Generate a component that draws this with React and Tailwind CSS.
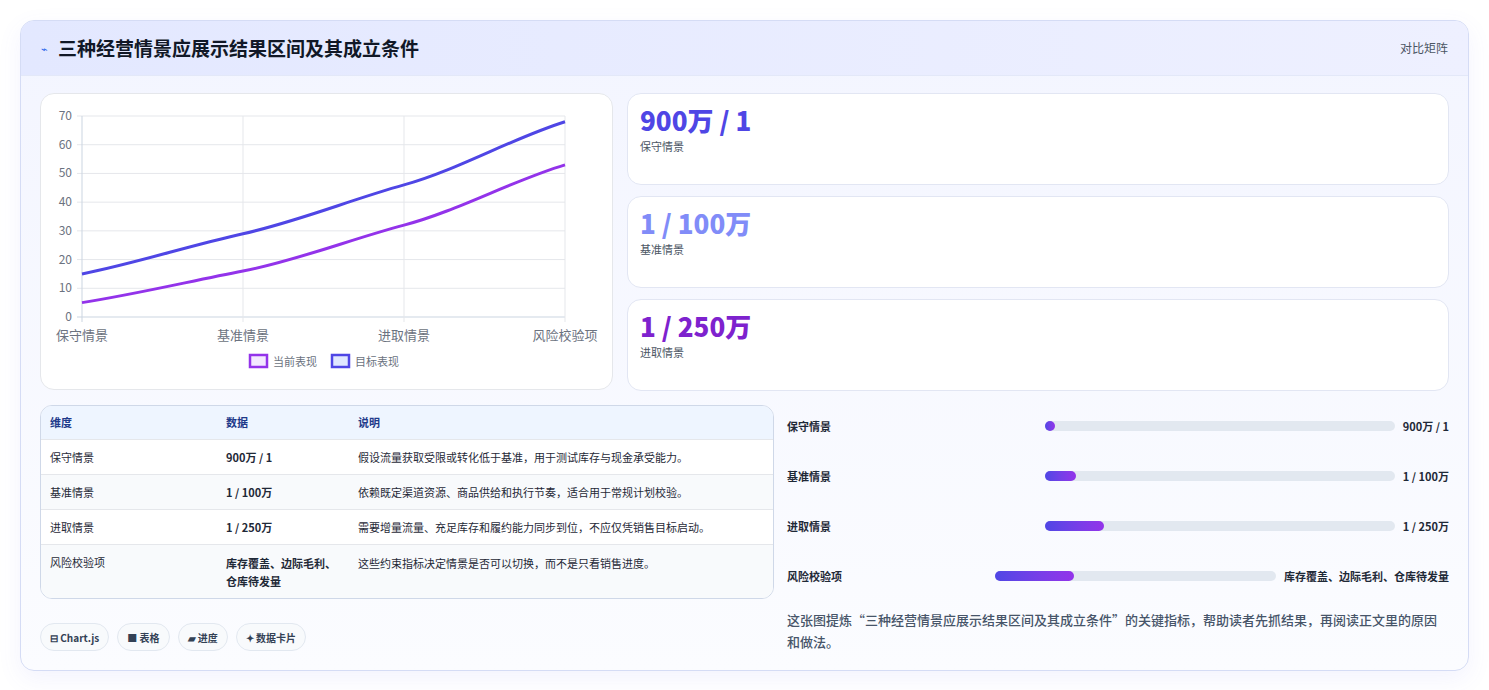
import React from 'react'

const font = { fontFamily: '"Noto Sans CJK SC", "Noto Sans", sans-serif' }

const cards = [
  { v: '900万 / 1', l: '保守情景', c: 'text-[#4f46e5]' },
  { v: '1 / 100万', l: '基准情景', c: 'text-[#818cf8]' },
  { v: '1 / 250万', l: '进取情景', c: 'text-[#7e22ce]' },
]

const rows = [
  ['保守情景', '900万 / 1', '假设流量获取受限或转化低于基准，用于测试库存与现金承受能力。'],
  ['基准情景', '1 / 100万', '依赖既定渠道资源、商品供给和执行节奏，适合用于常规计划校验。'],
  ['进取情景', '1 / 250万', '需要增量流量、充足库存和履约能力同步到位，不应仅凭销售目标启动。'],
  ['风险校验项', '库存覆盖、边际毛利、仓库待发量', '这些约束指标决定情景是否可以切换，而不是只看销售进度。'],
]

const bars = [
  ['保守情景', 3, '900万 / 1'],
  ['基准情景', 9, '1 / 100万'],
  ['进取情景', 17, '1 / 250万'],
  ['风险校验项', 28, '库存覆盖、边际毛利、仓库待发量'],
]

function Chart() {
  const x0 = 41, x1 = 524, y0 = 223, y1 = 22
  const xs = [0, 1, 2, 3].map(i => x0 + (i * (x1 - x0)) / 3)
  const y = v => y0 - ((y0 - y1) * v) / 70
  const path = vals => {
    const p = vals.map((v, i) => [xs[i], y(v)])
    let d = `M${p[0][0]},${p[0][1]}`
    for (let i = 1; i < p.length; i++) {
      const a = p[i - 1], b = p[i]
      const dx = (b[0] - a[0]) / 3
      const pa = p[i - 2] || a, nb = p[i + 1] || b
      const s1 = (b[1] - pa[1]) / (b[0] - pa[0] || 1)
      const s2 = (nb[1] - a[1]) / (nb[0] - a[0] || 1)
      d += ` C${a[0] + dx},${a[1] + s1 * dx * 0.8} ${b[0] - dx},${b[1] - s2 * dx * 0.8} ${b[0]},${b[1]}`
    }
    return d
  }
  const labels = ['保守情景', '基准情景', '进取情景', '风险校验项']
  return (
    <svg width="572" height="296" viewBox="0 0 572 296" style={font}>
      {[0, 10, 20, 30, 40, 50, 60, 70].map(v => (
        <g key={v}>
          <line x1={x0 - 5} x2={x1} y1={y(v)} y2={y(v)} stroke={v === 0 ? '#cbd5e1' : '#e5e7eb'} />
          <text x={x0 - 10} y={y(v) + 4} textAnchor="end" fontSize="12" fill="#6b7280">{v}</text>
        </g>
      ))}
      {xs.map((x, i) => (
        <g key={i}>
          <line x1={x} x2={x} y1={y1} y2={y0 + 5} stroke={i === 0 ? '#cbd5e1' : '#e5e7eb'} />
          <text x={x} y={y0 + 23} textAnchor="middle" fontSize="13" fill="#6b7280">{labels[i]}</text>
        </g>
      ))}
      <path d={path([15, 29, 46, 68])} fill="none" stroke="#4f46e5" strokeWidth="3" />
      <path d={path([5, 16, 32, 53])} fill="none" stroke="#9333ea" strokeWidth="3" />
      <rect x="209" y="261" width="17" height="12" fill="#f3e8ff" stroke="#9333ea" strokeWidth="2.5" />
      <text x="232" y="272" fontSize="11" fill="#6b7280">当前表现</text>
      <rect x="291" y="261" width="17" height="12" fill="#e0e7ff" stroke="#4f46e5" strokeWidth="2.5" />
      <text x="314" y="272" fontSize="11" fill="#6b7280">目标表现</text>
    </svg>
  )
}

export default function App() {
  return (
    <div className="min-h-screen bg-white p-5" style={font}>
      <div className="rounded-[14px] border border-[#d5dcf5] bg-gradient-to-b from-[#f3f5ff] to-[#fbfcff] shadow-[0_8px_24px_rgba(99,102,241,0.08)] overflow-hidden">
        <div className="flex items-center justify-between h-[55px] px-5 bg-gradient-to-r from-[#e3e8ff] to-[#eef0ff] border-b border-[#e3e8f8]">
          <div className="flex items-center gap-2.5">
            <span className="text-[#2563eb] text-[11px]">⌁</span>
            <h1 className="text-[19px] font-bold text-[#111827]">三种经营情景应展示结果区间及其成立条件</h1>
          </div>
          <span className="text-xs text-[#4b5563]">对比矩阵</span>
        </div>
        <div className="px-[19px] pt-[17px] pb-[17px]">
          <div className="flex gap-[14px]">
            <div className="w-[573px] h-[297px] rounded-[14px] border border-[#e5e7eb] bg-white">
              <Chart />
            </div>
            <div className="flex-1 flex flex-col gap-[11px]">
              {cards.map(c => (
                <div key={c.l} className="h-[92px] rounded-[14px] border border-[#e2e6f3] bg-white px-3 pt-2">
                  <div className={`text-[26px] font-extrabold leading-[36px] ${c.c}`}>{c.v}</div>
                  <div className="text-[11px] text-[#4b5563]">{c.l}</div>
                </div>
              ))}
            </div>
          </div>
          <div className="flex gap-[13px] mt-[14px]">
            <div className="w-[734px]">
              <div className="rounded-[12px] border border-[#cfd8e8] overflow-hidden bg-white text-[11px]">
                <div className="grid grid-cols-[176px_132px_1fr] bg-[#eef5ff] h-[33px] items-center px-[9px] font-bold text-[#1e3a8a]">
                  <span>维度</span><span>数据</span><span>说明</span>
                </div>
                {rows.map((r, i) => (
                  <div key={i} className={`grid grid-cols-[176px_132px_1fr] px-[9px] border-t border-[#e5e7eb] text-[#1f2937] ${i % 2 ? 'bg-[#f8fafc]' : 'bg-white'} ${i === 3 ? 'py-[9px] h-[54px]' : 'h-[35px] items-center'}`}>
                    <span>{r[0]}</span>
                    <span className="font-semibold pr-3 leading-[18px]">{r[1]}</span>
                    <span className="leading-[18px]">{r[2]}</span>
                  </div>
                ))}
              </div>
              <div className="flex gap-2 mt-[24px]">
                {['⊟ Chart.js', '■ 表格', '▰ 进度', '✦ 数据卡片'].map(t => (
                  <span key={t} className="h-[28px] px-[9px] flex items-center rounded-full border border-[#e2e8f0] bg-[#f8fafc] text-[10px] font-bold text-[#334155]">{t}</span>
                ))}
              </div>
            </div>
            <div className="flex-1 -mt-1">
              {bars.map(([l, p, v]) => (
                <div key={l} className="grid grid-cols-[1fr_1.4fr_auto] gap-2 items-center h-[50px] text-[11px] font-bold text-[#1f2937]">
                  <span>{l}</span>
                  <div className="h-[10px] rounded-full bg-[#e2e8f0]">
                    <div className="h-full min-w-[10px] rounded-full bg-gradient-to-r from-[#4f46e5] to-[#9333ea]" style={{ width: `${p}%` }} />
                  </div>
                  <span className="pr-0">{v}</span>
                </div>
              ))}
              <p className="mt-[8px] text-[13px] leading-[22px] text-[#475569] font-medium">这张图提炼“三种经营情景应展示结果区间及其成立条件”的关键指标，帮助读者先抓结果，再阅读正文里的原因和做法。</p>
            </div>
          </div>
        </div>
      </div>
    </div>
  )
}
